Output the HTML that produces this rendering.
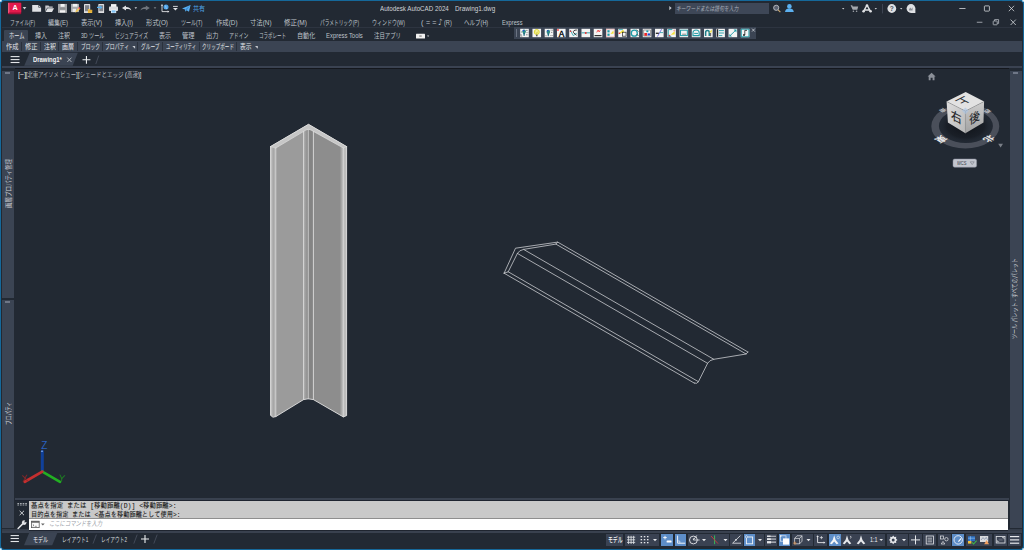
<!DOCTYPE html><html lang="ja"><head><meta charset="utf-8"><title>Autodesk AutoCAD 2024 - Drawing1.dwg</title><style>
html,body{margin:0;padding:0}
body{width:1024px;height:550px;overflow:hidden;background:#15689a;position:relative;font-family:"Liberation Sans","Noto Sans CJK JP",sans-serif}
.a{position:absolute}
.t{position:absolute;white-space:nowrap;transform-origin:0 50%;line-height:1;height:1em}
.v{position:absolute;white-space:nowrap;transform-origin:0 0;line-height:1;height:1em;font-size:6.6px;color:#d0d3d8}
svg{position:absolute;left:0;top:0;overflow:visible}

</style></head><body>
<div class="a" style="left:0px;top:0px;width:2.1px;height:2.1px;background:radial-gradient(circle at 0% 0%,#f2f2f2 0,#e4eef4 35%,#6fb4dc 70%,rgba(21,104,154,0) 100%)"></div>
<div class="a" style="left:1021.9px;top:0px;width:2.1px;height:2.1px;background:radial-gradient(circle at 100% 0%,#f2f2f2 0,#e4eef4 35%,#6fb4dc 70%,rgba(21,104,154,0) 100%)"></div>
<div class="a" style="left:0px;top:547.9px;width:2.1px;height:2.1px;background:radial-gradient(circle at 0% 100%,#f2f2f2 0,#e4eef4 35%,#6fb4dc 70%,rgba(21,104,154,0) 100%)"></div>
<div class="a" style="left:1021.9px;top:547.9px;width:2.1px;height:2.1px;background:radial-gradient(circle at 100% 100%,#f2f2f2 0,#e4eef4 35%,#6fb4dc 70%,rgba(21,104,154,0) 100%)"></div>
<div class="a" style="left:1.2px;top:1.2px;width:1021.4px;height:547.4px;border-radius:3.5px;background:#222933"></div>
<div class="a" style="left:2px;top:26.6px;width:1020px;height:0.8px;background:#2d3440;"></div>
<div class="a" style="left:674.5px;top:3px;width:94.5px;height:10.6px;background:#3e4757;"></div>
<div class="a" style="left:4px;top:30px;width:24px;height:11.2px;background:#3b4453;border-radius:1px 1px 0 0;"></div>
<div class="a" style="left:2px;top:41px;width:1020px;height:10.5px;background:#3b4453;"></div>
<div class="a" style="left:21.0px;top:41.5px;width:1.0px;height:9.5px;background:#2a313c;"></div>
<div class="a" style="left:40.0px;top:41.5px;width:1.0px;height:9.5px;background:#2a313c;"></div>
<div class="a" style="left:58.0px;top:41.5px;width:1.0px;height:9.5px;background:#2a313c;"></div>
<div class="a" style="left:77.0px;top:41.5px;width:1.0px;height:9.5px;background:#2a313c;"></div>
<div class="a" style="left:102.2px;top:41.5px;width:1.0px;height:9.5px;background:#2a313c;"></div>
<div class="a" style="left:136.6px;top:41.5px;width:1.0px;height:9.5px;background:#2a313c;"></div>
<div class="a" style="left:161.9px;top:41.5px;width:1.0px;height:9.5px;background:#2a313c;"></div>
<div class="a" style="left:198.5px;top:41.5px;width:1.0px;height:9.5px;background:#2a313c;"></div>
<div class="a" style="left:235.7px;top:41.5px;width:1.0px;height:9.5px;background:#2a313c;"></div>
<div class="a" style="left:514px;top:27.4px;width:241.5px;height:11.2px;background:#3b4453;"></div>
<div class="a" style="left:516px;top:29px;width:1.2px;height:7.5px;background:#6b7382;"></div>
<svg width="1024" height="550"><polygon points="24.2,65.7 29.7,52.8 77.8,52.8 72.7,65.7" fill="#3b4453"/></svg>
<div class="a" style="left:2px;top:65.5px;width:1020px;height:2.6px;background:#3a4251;"></div>
<div class="a" style="left:15px;top:68px;width:993.5px;height:1.2px;background:#14171d;"></div>
<div class="a" style="left:2.4px;top:71px;width:11.8px;height:226.8px;background:#3b4453;"></div>
<div class="a" style="left:2.4px;top:300px;width:11.8px;height:228.2px;background:#3b4453;"></div>
<div class="a" style="left:1010px;top:71px;width:12px;height:457.2px;background:#3b4453;"></div>
<div class="a" style="left:5px;top:72.3px;width:5.2px;height:1.8px;background:#6f7787;"></div>
<div class="a" style="left:5px;top:301.4px;width:5.2px;height:1.8px;background:#6f7787;"></div>
<div class="a" style="left:1012.7px;top:72.3px;width:5.2px;height:1.8px;background:#6f7787;"></div>
<div class="a" style="left:15px;top:497.5px;width:993.5px;height:2.2px;background:#39414f;"></div>
<div class="a" style="left:15px;top:499.7px;width:993.5px;height:1.3px;background:#1e2430;"></div>
<div class="a" style="left:29px;top:501px;width:979.3px;height:17px;background:#c9c9c9;"></div>
<div class="a" style="left:29px;top:518px;width:979.3px;height:11.8px;background:#ffffff;"></div>
<div class="a" style="left:29px;top:517.9px;width:979.3px;height:0.7px;background:#8e8e8e;"></div>
<div class="a" style="left:2px;top:529.8px;width:1020px;height:1.1px;background:#1f2530;"></div>
<div class="a" style="left:2px;top:530.9px;width:1020px;height:1.7px;background:#39414f;"></div>
<div class="a" style="left:2px;top:528.7px;width:27px;height:2.3px;background:#353d4a;"></div>
<div class="a" style="left:1008.3px;top:528.7px;width:13.7px;height:2.3px;background:#353d4a;"></div>
<svg width="1024" height="550"><polygon points="24,545.2 29.3,532.6 57.5,532.6 52.2,545.2" fill="#3b4453"/></svg>
<div class="a" style="left:606.3px;top:533.8px;width:17.2px;height:12.1px;background:#3a4252;"></div>
<div class="a" style="left:625px;top:533.8px;width:34.3px;height:12.1px;background:#3a4252;"></div>
<div class="a" style="left:661px;top:533.8px;width:12px;height:12.1px;background:#5e8ec8;"></div>
<div class="a" style="left:674.5px;top:533.8px;width:11.9px;height:12.1px;background:#5e8ec8;"></div>
<div class="a" style="left:687.8px;top:533.8px;width:41.2px;height:12.1px;background:#3a4252;"></div>
<div class="a" style="left:730px;top:533.8px;width:12.5px;height:12.1px;background:#3a4252;"></div>
<div class="a" style="left:743.5px;top:533.8px;width:11.5px;height:12.1px;background:#5e8ec8;"></div>
<div class="a" style="left:755px;top:533.8px;width:9px;height:12.1px;background:#3a4252;"></div>
<div class="a" style="left:765.2px;top:533.8px;width:11.8px;height:12.1px;background:#3a4252;"></div>
<div class="a" style="left:778.8px;top:533.8px;width:11.7px;height:12.1px;background:#5e8ec8;"></div>
<div class="a" style="left:791.5px;top:533.8px;width:21.5px;height:12.1px;background:#3a4252;"></div>
<div class="a" style="left:814.2px;top:533.8px;width:12.8px;height:12.1px;background:#3a4252;"></div>
<div class="a" style="left:829px;top:533.8px;width:12px;height:12.1px;background:#5e8ec8;"></div>
<div class="a" style="left:841px;top:533.8px;width:44.3px;height:12.1px;background:#3a4252;"></div>
<div class="a" style="left:886.8px;top:533.8px;width:21.2px;height:12.1px;background:#3a4252;"></div>
<div class="a" style="left:909.2px;top:533.8px;width:12.8px;height:12.1px;background:#3a4252;"></div>
<div class="a" style="left:923.3px;top:533.8px;width:13.0px;height:12.1px;background:#3a4252;"></div>
<div class="a" style="left:937.7px;top:533.8px;width:12.9px;height:12.1px;background:#3a4252;"></div>
<div class="a" style="left:952.1px;top:533.8px;width:12.3px;height:12.1px;background:#5e8ec8;"></div>
<div class="a" style="left:966.3px;top:533.8px;width:26.2px;height:12.1px;background:#3a4252;"></div>
<div class="a" style="left:994.1px;top:533.8px;width:12.8px;height:12.1px;background:#3a4252;"></div>
<div class="a" style="left:1008.1px;top:533.8px;width:13.1px;height:12.1px;background:#3a4252;"></div>
<svg width="1024" height="550" viewBox="0 0 1024 550">
<g stroke-linejoin="round" stroke-linecap="round">
<polygon points="270.4,146.6 308.5,124.3 346.7,146.6 346.7,415.6 343.3,416.9 313.4,399.6 308.2,398.8 303.6,399.6 275.8,416.6 273,417.2 270.5,415.3" fill="#9a9a9a"/>
<polygon points="270.4,146.6 308.5,124.3 346.7,146.6 343.4,147.9 313.4,131.4 311,129.8 308.5,129.3 306,129.8 303.6,131.2 275.8,147.9" fill="#c6c6c6"/>
<polygon points="270.5,146.8 275.8,148 275.8,416.6 273,417.2 270.5,415.3" fill="#b2b2b2"/>
<polygon points="270.5,146.8 273,147.6 273,417.2 270.5,415.3" fill="#bdbdbd"/>
<polygon points="275.8,148 303.6,131.4 303.6,399.6 275.8,416.6" fill="#9b9b9b"/>
<defs><linearGradient id="cg" x1="0" y1="0" x2="1" y2="0"><stop offset="0" stop-color="#adadad"/><stop offset="1" stop-color="#878787"/></linearGradient><linearGradient id="tg" x1="0" y1="0" x2="1" y2="0"><stop offset="0" stop-color="#8d8d8d"/><stop offset="1" stop-color="#c6c6c6"/></linearGradient></defs>
<polygon points="303.6,131.4 308.3,129.4 308.3,398.8 303.6,399.6" fill="url(#cg)"/>
<polygon points="308.3,129.4 313.4,131.4 313.4,399.6 308.3,398.8" fill="#848484"/>
<polygon points="313.4,131.4 343.4,148 343.4,416.9 313.4,399.6" fill="#8d8d8d"/>
<polygon points="339.8,146.2 343.4,148 343.4,416.9 339.8,414.9" fill="url(#tg)"/>
<polygon points="343.4,148 346.7,146.8 346.7,415.6 343.4,416.9" fill="#bcbcbc"/>
<polyline points="270.4,146.6 308.5,124.3 346.7,146.6" fill="none" stroke="#dcdcdc" stroke-width="1.0" opacity="1"/>
<polyline points="275.8,148 303.6,131.4 306,129.9 308.5,129.3 311,129.9 313.4,131.4 343.4,148" fill="none" stroke="#dcdcdc" stroke-width="0.8" opacity="1"/>
<polyline points="270.6,146.6 270.6,415.3 273,417.2 275.8,416.6 303.6,399.6 308.2,398.8 313.4,399.6 343.3,416.9 346.6,415.6 346.6,146.6" fill="none" stroke="#dcdcdc" stroke-width="0.9" opacity="1"/>
<polyline points="273,147.4 273,417" fill="none" stroke="#8c8c8c" stroke-width="0.6" opacity="0.9"/>
<polyline points="275.8,148 275.8,416.6" fill="none" stroke="#dcdcdc" stroke-width="0.8" opacity="1"/>
<polyline points="303.6,131.4 303.6,399.6" fill="none" stroke="#dcdcdc" stroke-width="0.9" opacity="1"/>
<polyline points="308.3,129.4 308.3,398.8" fill="none" stroke="#dcdcdc" stroke-width="0.8" opacity="0.9"/>
<polyline points="313.4,131.4 313.4,399.6" fill="none" stroke="#dcdcdc" stroke-width="0.9" opacity="1"/>
<polyline points="343.4,148 343.4,416.9" fill="none" stroke="#dcdcdc" stroke-width="0.8" opacity="1"/>
<polyline points="270.4,146.6 275.8,148" fill="none" stroke="#dcdcdc" stroke-width="0.7" opacity="1"/>
<polyline points="346.7,146.6 343.4,148" fill="none" stroke="#dcdcdc" stroke-width="0.7" opacity="1"/>
</g>
<g fill="none" stroke="#d4d6d9" stroke-width="0.75" stroke-linejoin="round" stroke-linecap="round">
<path d="M504.1,273.2 L515.5,248.2 L557.7,242.1 L555.9,244.1 L523.6,249.4 Q519.3,250.2 517.4,253.4 L508.2,271.8 L504.1,273.2"/>
<path d="M557.7,242.1 L747.9,352.0"/>
<path d="M555.9,244.1 L746.1,354.0"/>
<path d="M523.6,249.4 L713.8,359.3"/>
<path d="M517.4,253.4 L707.6,363.3"/>
<path d="M508.2,271.8 L698.4,381.7"/>
<path d="M504.1,273.2 L694.3,383.1"/>
<path d="M747.9,352.0 L746.1,354.0 L713.8,359.3 Q709.5,360.1 707.6,363.3 L698.4,381.7 Q697.2,384.3 694.3,383.1"/>
</g>
<g stroke-linecap="round" fill="none">
<line x1="42.3" y1="471.3" x2="42.3" y2="451.2" stroke="#10409a" stroke-width="3"/>
<line x1="42.3" y1="471.6" x2="60" y2="481.8" stroke="#22b022" stroke-width="2.6"/>
<line x1="42.3" y1="471.6" x2="24.8" y2="481.8" stroke="#c42f2f" stroke-width="2.8"/>
<circle cx="42" cy="451.3" r="0.8" fill="#9cc4ff" stroke="none"/>
</g>
<text x="41.2" y="448.8" font-family="Liberation Sans,sans-serif" font-size="10" fill="#2a62c0">Z</text>
<text x="21.6" y="481.5" font-family="Liberation Sans,sans-serif" font-size="9.5" fill="#8a2626" transform="rotate(-8 25 478)">X</text>
<text x="58.8" y="481.6" font-family="Liberation Sans,sans-serif" font-size="9.5" fill="#1c8a1c" transform="rotate(8 62 478)">Y</text>
<defs><radialGradient id="vs" cx="0.5" cy="0.5" r="0.5"><stop offset="0" stop-color="#0c0f14" stop-opacity="0.9"/><stop offset="0.7" stop-color="#14181f" stop-opacity="0.6"/><stop offset="1" stop-color="#222933" stop-opacity="0"/></radialGradient>
<linearGradient id="fl" x1="0" y1="0" x2="1" y2="1"><stop offset="0" stop-color="#dedede"/><stop offset="1" stop-color="#b8b8b8"/></linearGradient>
<linearGradient id="fr" x1="0" y1="0" x2="0" y2="1"><stop offset="0" stop-color="#cdcdcd"/><stop offset="1" stop-color="#a2a2a2"/></linearGradient></defs>
<path fill-rule="evenodd" fill="#4a4f5a" d="M931.3,126.2 a34,22.2 0 1,0 68,0 a34,22.2 0 1,0 -68,0 Z M938.9,126 a27,17 0 1,1 54,0 a27,17 0 1,1 -54,0 Z"/>
<ellipse cx="965.6" cy="126" rx="27" ry="17" fill="url(#vs)"/>
<polygon points="965.7,92 984.1,101.5 965.4,111.1 946.6,101.5" fill="#e2e2e2"/>
<polygon points="946.6,101.5 965.4,111.1 965.4,133.3 947.9,122.5" fill="url(#fl)"/>
<polygon points="984.1,101.5 965.4,111.1 965.4,133.3 983.5,122.5" fill="url(#fr)"/>
<polyline points="946.6,101.5 965.4,111.1 984.1,101.5" fill="none" stroke="#8e8e8e" stroke-width="0.45"/><line x1="965.4" y1="111.1" x2="965.4" y2="133.3" stroke="#b0b0b0" stroke-width="0.4"/>
<rect x="963" y="108.4" width="4.8" height="4.8" fill="#a9c4e6" opacity="0.6" transform="rotate(45 965.4 110.8)"/>
<text font-family="Liberation Sans,Noto Sans CJK JP,sans-serif" font-size="11" fill="#2c2e32" font-weight="500" text-anchor="middle" transform="matrix(-0.935,0.48,-0.92,-0.475,963.6,100.6)" x="0" y="3.96">上</text>
<text font-family="Liberation Sans,Noto Sans CJK JP,sans-serif" font-size="11.5" fill="#2c2e32" font-weight="500" text-anchor="middle" transform="matrix(0.94,0.48,0.03,1.05,956.2,117.2)" x="0" y="4.14">右</text>
<text font-family="Liberation Sans,Noto Sans CJK JP,sans-serif" font-size="11.5" fill="#2c2e32" font-weight="500" text-anchor="middle" transform="matrix(0.935,-0.48,0,1.08,974.6,117.4)" x="0" y="4.14">後</text>
<text font-family="Liberation Sans,Noto Sans CJK JP,sans-serif" font-size="9.6" fill="#e6e6e6" font-weight="700" text-anchor="middle" transform="matrix(-0.84,0.53,-0.84,-0.53,940.8,139)" x="0" y="3.46">東</text>
<text font-family="Liberation Sans,Noto Sans CJK JP,sans-serif" font-size="9.2" fill="#e6e6e6" font-weight="700" text-anchor="middle" transform="matrix(-0.84,0.53,-0.84,-0.53,989,138.8)" x="0" y="3.31">北</text>
<text font-family="Liberation Sans,Noto Sans CJK JP,sans-serif" font-size="5.6" fill="#c4c6ca" font-weight="700" text-anchor="middle" transform="matrix(-0.84,0.5,-0.84,-0.5,942.6,110.1)" x="0" y="2.02">南</text>
<text font-family="Liberation Sans,Noto Sans CJK JP,sans-serif" font-size="5.6" fill="#c4c6ca" font-weight="700" text-anchor="middle" transform="matrix(-0.84,0.5,-0.84,-0.5,987.3,111.1)" x="0" y="2.02">西</text>
<path d="M927.6,76.6 L931.6,72.8 L935.6,76.6 L934.5,76.6 L934.5,80.2 L932.6,80.2 L932.6,77.8 L930.6,77.8 L930.6,80.2 L928.7,80.2 L928.7,76.6 Z" fill="#8b9099"/>
<polygon points="998.2,143.8 1003,143.8 1000.6,147.6" fill="#7a7f88"/>
<rect x="953" y="159" width="23.6" height="8.2" rx="1.6" fill="#c3c6cf" stroke="#8f93a0" stroke-width="0.5"/>
<polygon points="970.2,161.8 974.2,161.8 972.2,164.6" fill="none" stroke="#6a6e78" stroke-width="0.5"/>
</svg>
<svg width="1024" height="550" viewBox="0 0 1024 550">
<rect x="8" y="2.8" width="13.2" height="11.4" rx="0.8" fill="#a31038"/>
<rect x="8" y="2.8" width="13.2" height="9.8" rx="0.6" fill="#e21a4c"/>
<polygon points="8,2.8 9.4,3.2 9.4,12.2 8,13.6" fill="#f0587c"/>
<text x="15" y="10.3" font-family="Liberation Sans,sans-serif" font-weight="bold" font-size="7.2" fill="#fff" text-anchor="middle">A</text>
<polygon points="22.6,7 26.400000000000002,7 24.5,9.4" fill="#c9ccd1"/>
<polygon points="32.2,5 38.4,5 41.1,7.6 41.1,11.8 32.2,11.8" fill="#dfe1e4"/><polygon points="38.4,5 38.4,7.6 41.1,7.6" fill="#222933"/><polygon points="38.9,5.6 38.9,7.1 40.4,7.1" fill="#dfe1e4"/>
<path d="M45.3,5.4 h3.2 l0.8,1 h3.4 v1.4 h-5.6 l-1.8,3.6 z" fill="#c9cbcf"/><polygon points="47.5,8.3 54,8.3 52,11.9 45.5,11.9" fill="#dfe1e4"/>
<rect x="58" y="3.9" width="9" height="9" fill="#a4a6a9"/><rect x="60.6" y="4" width="4" height="2.8" fill="#f4f4f4"/><rect x="60" y="10.3" width="5.2" height="2.2" fill="#f4f4f4"/><rect x="59.8" y="7.6" width="5.6" height="2" fill="#8e9093"/>
<rect x="71" y="3.9" width="8" height="8.2" fill="#a9abae"/><rect x="72.8" y="3.9" width="4.6" height="2.8" fill="#f2f2f2"/><rect x="72.6" y="8.8" width="3.4" height="3.3" fill="#e8e8e8"/>
<polygon points="75.2,12.6 76,10.4 78.6,7.6 80,9 77.3,11.8" fill="#f2c95c"/><polygon points="78.2,7.9 79.2,6.9 80.6,8.3 79.6,9.3" fill="#e8455a"/>
<rect x="84" y="4.1" width="6.2" height="9" rx="0.6" fill="#dcdde0"/><rect x="85" y="5.2" width="4.2" height="6" fill="#808389"/>
<path d="M87.9,9 h1.6 l0.5,0.7 h2.2 v3.2 h-4.3 z" fill="#f0bc42"/><rect x="88.3" y="10.6" width="4" height="0.7" fill="#c9952a"/>
<rect x="98.3" y="4.1" width="5.8" height="9" rx="0.6" fill="#dcdde0"/><rect x="99.3" y="5.2" width="3.8" height="6" fill="#808389"/>
<path d="M97,6.8 h3.2 v-1.2 l2.3,1.8 l-2.3,1.8 v-1.2 h-3.2 z" fill="#58b2f2"/>
<rect x="111" y="4.1" width="5.4" height="3" fill="#f4f4f4"/><rect x="109" y="6.4" width="9" height="4.6" rx="0.8" fill="#dcdde0"/><rect x="111" y="9.6" width="5.2" height="3.5" fill="#f4f4f4"/><rect x="111.6" y="10.3" width="4" height="2.3" fill="#7cc0f4"/>
<path d="M122,8 L126,5.4 V7 C129,7 131,8.4 131.3,10.4 C130,9.2 128.4,8.9 126,9 V10.6 Z" fill="#dfe1e4"/>
<polygon points="134.5,7.3 137.1,7.3 135.8,9.0" fill="#c9ccd1"/>
<path d="M149.8,8 L145.8,5.4 V7 C142.8,7 140.8,8.4 140.5,10.4 C141.8,9.2 143.4,8.9 145.8,9 V10.6 Z" fill="#6f747c"/>
<polygon points="153.7,7.3 156.29999999999998,7.3 155.0,9.0" fill="#7b8088"/>
<path d="M162,4.6 V11.6 H168.6" fill="none" stroke="#dfe1e4" stroke-width="0.9"/><polygon points="160.8,5.8 162,4.2 163.2,5.8" fill="#dfe1e4"/><polygon points="167.6,10.4 169.4,11.6 167.6,12.8" fill="#dfe1e4"/>
<circle cx="166" cy="7" r="2.5" fill="#4fa4ea"/><path d="M165,5.6 q1.4,0.6 1,1.8 t0.8,1.4" fill="none" stroke="#bfe0fb" stroke-width="0.6"/>
<rect x="173" y="5.9" width="4.8" height="0.9" fill="#dfe1e4"/><polygon points="173,8 177.8,8 175.4,10.5" fill="#dfe1e4"/>
<polygon points="182,8.4 190.6,5 189,11.8 186.6,10.2 185.4,11.8 185,9.6" fill="#58aef0"/><polygon points="185,9.6 190.6,5 186.6,10.2" fill="#3b8ad0"/>
<rect x="416" y="33.8" width="9" height="4.6" rx="0.5" fill="#f0f0f0"/><rect x="419.3" y="35.6" width="2.4" height="0.9" fill="#555"/><polygon points="427,35.6 429.2,35.6 428.1,37.0" fill="#c9ccd1"/>
<path d="M132.3,46 h2.8 v2.8 z" fill="#c9ccd1"/>
<path d="M255,46 h2.8 v2.8 z" fill="#c9ccd1"/>
<rect x="10.6" y="56.050000000000004" width="8.9" height="1.1" fill="#e4e6e9"/>
<rect x="10.6" y="59.050000000000004" width="8.9" height="1.1" fill="#e4e6e9"/>
<rect x="10.6" y="61.95" width="8.9" height="1.1" fill="#e4e6e9"/>
<path d="M67.3,57.6 L71.5,62 M71.5,57.6 L67.3,62" stroke="#c2c6cc" stroke-width="0.8" fill="none"/>
<path d="M82.5,59.8 H90.4 M86.45,56 V63.7" stroke="#eceef0" stroke-width="1.1" fill="none"/>
<path d="M98.8,55.5 L95.8,64" stroke="#4a5261" stroke-width="0.8" fill="none"/>
<polygon points="669.3,6 671.6,8.1 669.3,10.2" fill="#c9ccd1"/>
<circle cx="776.2" cy="7.8" r="2.6" fill="#5a6170" stroke="#c9ccd1" stroke-width="0.8"/><path d="M778,9.8 L780.4,12.2" stroke="#c9a670" stroke-width="1.1"/>
<circle cx="789.4" cy="6.4" r="2.3" fill="#5cb0f0"/><path d="M785,12 q0.4,-3.4 4.4,-3.4 t4.4,3.4 z" fill="#5cb0f0"/>
<polygon points="842,8 844.4,8 843.2,9.5" fill="#c9ccd1"/>
<path d="M850.6,5.2 h1.6 l0.6,1.2 h5.4 l-0.9,3.4 h-4.6 z" fill="#a4a8ae"/><circle cx="853.4" cy="11.3" r="0.8" fill="#a4a8ae"/><circle cx="856.6" cy="11.3" r="0.8" fill="#a4a8ae"/>
<path d="M867,5.2 L863.2,11.8 M867,5.2 L870.8,11.8 M864.6,10 H869.6" stroke="#dfe1e4" stroke-width="1.4" fill="none"/><circle cx="867" cy="5.5" r="1.3" fill="#dfe1e4"/><circle cx="863.6" cy="11.3" r="1.3" fill="#dfe1e4"/><circle cx="870.6" cy="11.3" r="1.3" fill="#dfe1e4"/>
<polygon points="874.6,8 877.0,8 875.8000000000001,9.5" fill="#c9ccd1"/>
<rect x="882.2" y="4" width="0.7" height="9.4" fill="#4a5160"/>
<circle cx="891.8" cy="8.5" r="4.4" fill="#dfe1e4"/><text x="891.8" y="10.9" font-family="Liberation Sans,sans-serif" font-size="6.6" font-weight="bold" text-anchor="middle" fill="#4a5160">?</text>
<polygon points="900,8 902.4,8 901.2,9.5" fill="#c9ccd1"/>
<path d="M915.4,8.5 a4.4,4.4 0 1,0 -4.4,4.4 h4.4 z" fill="#dfe1e4"/><path d="M909,9.6 l1.2,-2 l1.2,1.4 l1.2,-1.8 v3.2 h-3.6 z" fill="#8a8f98"/>
<rect x="959.3" y="8.1" width="6.2" height="0.8" fill="#d6d9dd"/>
<rect x="984.4" y="5.9" width="5" height="5.2" rx="0.6" fill="none" stroke="#d6d9dd" stroke-width="0.8"/>
<path d="M1008.8,5.8 L1014.1,11.2 M1014.1,5.8 L1008.8,11.2" stroke="#d6d9dd" stroke-width="0.8"/>
<rect x="976.8" y="21.8" width="5.6" height="0.8" fill="#b8bcc3"/>
<rect x="993.2" y="21" width="4" height="3.8" rx="0.5" fill="none" stroke="#b8bcc3" stroke-width="0.8"/><path d="M994.6,21 V19.6 H998.6 V23.4 H997.4" fill="none" stroke="#b8bcc3" stroke-width="0.8"/>
<path d="M1010.6,19.6 L1015.8,25 M1015.8,19.6 L1010.6,25" stroke="#d6d9dd" stroke-width="0.8"/>
<rect x="520.20" y="28.8" width="8.6" height="8.4" fill="#f4f4f4"/>
<rect x="532.46" y="28.8" width="8.6" height="8.4" fill="#f4f4f4"/>
<rect x="544.71" y="28.8" width="8.6" height="8.4" fill="#f4f4f4"/>
<rect x="556.97" y="28.8" width="8.6" height="8.4" fill="#f4f4f4"/>
<rect x="569.22" y="28.8" width="8.6" height="8.4" fill="#f4f4f4"/>
<rect x="581.48" y="28.8" width="8.6" height="8.4" fill="#f4f4f4"/>
<rect x="593.74" y="28.8" width="8.6" height="8.4" fill="#f4f4f4"/>
<rect x="605.99" y="28.8" width="8.6" height="8.4" fill="#f4f4f4"/>
<rect x="618.25" y="28.8" width="8.6" height="8.4" fill="#f4f4f4"/>
<rect x="630.50" y="28.8" width="8.6" height="8.4" fill="#f4f4f4"/>
<rect x="642.76" y="28.8" width="8.6" height="8.4" fill="#f4f4f4"/>
<rect x="655.02" y="28.8" width="8.6" height="8.4" fill="#f4f4f4"/>
<rect x="667.27" y="28.8" width="8.6" height="8.4" fill="#f4f4f4"/>
<rect x="679.53" y="28.8" width="8.6" height="8.4" fill="#f4f4f4"/>
<rect x="691.78" y="28.8" width="8.6" height="8.4" fill="#f4f4f4"/>
<rect x="704.04" y="28.8" width="8.6" height="8.4" fill="#f4f4f4"/>
<rect x="716.30" y="28.8" width="8.6" height="8.4" fill="#f4f4f4"/>
<rect x="728.55" y="28.8" width="8.6" height="8.4" fill="#f4f4f4"/>
<rect x="740.81" y="28.8" width="8.6" height="8.4" fill="#f4f4f4"/>
<ellipse cx="524.10" cy="31.6" rx="1.8" ry="2.1" fill="#2c8c86"/><circle cx="523.50" cy="30.6" r="0.8" fill="#2a4ad0"/><polygon points="523.10,33 525.10,33 524.50,36 523.70,36" fill="#1d6a80"/><path d="M521.00,34 v2.2 h1.4 M526.20,30.4 h1.8 M526.60,32.6 h1.6 M526.20,34.8 h2 M521.20,32 h1" stroke="#222" stroke-width="0.6" fill="none" stroke-dasharray="0.8 0.5"/>
<ellipse cx="536.76" cy="32" rx="2.5" ry="2.5" fill="#f7f4a6" stroke="#dcd422" stroke-width="0.9"/><path d="M535.66,31.4 l1.1,2.4 l1.1,-2.4" stroke="#cfc81e" stroke-width="0.6" fill="none"/><rect x="535.96" y="34.6" width="1.6" height="1.7" fill="#555"/>
<ellipse cx="548.31" cy="31.8" rx="1.8" ry="2.1" fill="#2c8c86"/><circle cx="547.71" cy="30.8" r="0.8" fill="#2a4ad0"/><polygon points="547.31,33.2 549.31,33.2 548.71,36.2 547.91,36.2" fill="#1d6a80"/><path d="M545.51,35.8 h1.6 M550.71,30.2 h2 M551.11,32.4 h1.6 M550.51,35.6 h2.2" stroke="#222" stroke-width="0.6" fill="none" stroke-dasharray="0.8 0.5"/>
<text x="561.57" y="36.5" font-family="Liberation Sans,sans-serif" font-size="8.4" text-anchor="middle" fill="#000" stroke="#000" stroke-width="0.35">A</text><rect x="557.17" y="29.2" width="1.6" height="1.6" fill="#f33"/>
<path d="M570.22,30 l3,5.6 l3.6,-2.4" stroke="#1f9aa6" stroke-width="0.8" fill="none"/><path d="M576.82,30 q-4,0 -3.4,2.6 l3.2,2.6" stroke="#222" stroke-width="0.9" fill="none"/><rect x="569.82" y="30.6" width="1.4" height="1.4" fill="#e33"/>
<rect x="581.48" y="32.4" width="8.6" height="0.9" fill="#1f9aa6"/><circle cx="585.78" cy="32.9" r="1" fill="#e33"/>
<path d="M596.74,32.4 l1.4,-2.4 l1,2 l1.2,-2" stroke="#e33" stroke-width="0.8" fill="none"/><rect x="594.54" y="35" width="7" height="1.2" fill="#333"/>
<rect x="606.29" y="29.1" width="8" height="7.8" fill="none" stroke="#e7a2a2" stroke-width="0.6"/><rect x="607.39" y="30.2" width="2.2" height="2.2" fill="#1f9aa6"/><rect x="607.39" y="33.6" width="2.2" height="2.2" fill="#1f9aa6"/><polygon points="610.39,34 613.39,30.4 613.79,33.4" fill="#f3e23a"/>
<polygon points="618.85,33.4 623.25,29.4 624.25,32.6" fill="#f3e23a"/><rect x="622.45" y="32.2" width="3.6" height="4" fill="none" stroke="#222" stroke-width="0.7"/><rect x="618.65" y="32.6" width="1.6" height="1.4" fill="#e33"/><path d="M618.85,29.6 h4" stroke="#1f9aa6" stroke-width="0.8"/>
<circle cx="634.30" cy="33.2" r="3" fill="none" stroke="#1f9aa6" stroke-width="1.3"/><path d="M636.50,29.6 l2,2 M636.70,34 l1.8,2" stroke="#333" stroke-width="0.7"/>
<rect x="643.76" y="30" width="6.6" height="6" fill="none" stroke="#666" stroke-width="0.6"/><rect x="644.36" y="33" width="2.6" height="2.8" fill="#e22"/><rect x="647.56" y="33.4" width="2.4" height="2" fill="#24c"/><rect x="646.36" y="30.4" width="2" height="1.8" fill="#1f9aa6"/>
<path d="M657.42,36.6 L661.62,29.2" stroke="#44d" stroke-width="0.7"/><rect x="655.82" y="32.6" width="3" height="1.4" fill="#333"/><path d="M660.02,32.6 h3" stroke="#1f9aa6" stroke-width="0.8"/>
<path d="M668.27,29.6 v6.8 h3 M668.27,29.6 h4" stroke="#1f9aa6" stroke-width="0.9" fill="none"/><polygon points="670.67,34.8 674.87,31 674.67,34.6" fill="#f3e23a"/><circle cx="674.27" cy="30.4" r="1" fill="#e7a2a2"/><circle cx="669.47" cy="35.6" r="0.9" fill="#e33"/>
<rect x="680.53" y="30.2" width="6.8" height="5.4" fill="none" stroke="#1f9aa6" stroke-width="1"/><path d="M682.13,34.2 h4" stroke="#444" stroke-width="0.6"/>
<path d="M692.98,33 q0,-3 3.1,-3 t3.1,3 v2.6 h-6.2 z" fill="none" stroke="#1f9aa6" stroke-width="1.1"/><path d="M694.18,33.4 h3.8" stroke="#1f9aa6" stroke-width="1"/>
<path d="M705.64,36 v-3.6 q0,-2 1.8,-2 t1.8,2 v3.6" fill="none" stroke="#1f7f8a" stroke-width="1.5"/><polygon points="709.04,32.6 711.84,29.6 711.64,32.6" fill="#f3e23a"/><path d="M710.64,33 v3.2" stroke="#333" stroke-width="0.8"/>
<rect x="716.90" y="29.2" width="1.3" height="7.6" fill="#222"/><path d="M718.90,30.6 h5 M718.90,33 h5 M718.90,35.6 h3.4" stroke="#1f9aa6" stroke-width="0.9"/>
<path d="M729.75,36 L735.95,30" stroke="#1f9aa6" stroke-width="0.9"/><polygon points="733.55,29.6 736.55,29.4 736.35,32.4" fill="#1f9aa6"/><polygon points="729.35,34 729.35,36.6 731.95,36.6" fill="#1f9aa6"/>
<rect x="741.31" y="29.2" width="7.6" height="7.6" fill="none" stroke="#1f9aa6" stroke-width="0.9"/><path d="M744.81,30.4 v4.6 M744.81,30.4 h2.2" stroke="#222" stroke-width="0.8" fill="none"/><circle cx="744.01" cy="35" r="1" fill="#222"/>
<path d="M752,28.6 L754.8,31.6 M754.8,28.6 L752,31.6" stroke="#e0e2e6" stroke-width="0.7"/>
<rect x="17.4" y="503" width="1.7" height="0.8" fill="#c9ccd1"/><rect x="17.4" y="504.6" width="1.7" height="0.8" fill="#c9ccd1"/>
<rect x="20.0" y="503" width="1.7" height="0.8" fill="#c9ccd1"/><rect x="20.0" y="504.6" width="1.7" height="0.8" fill="#c9ccd1"/>
<rect x="22.6" y="503" width="1.7" height="0.8" fill="#c9ccd1"/><rect x="22.6" y="504.6" width="1.7" height="0.8" fill="#c9ccd1"/>
<rect x="25.2" y="503" width="1.7" height="0.8" fill="#c9ccd1"/><rect x="25.2" y="504.6" width="1.7" height="0.8" fill="#c9ccd1"/>
<path d="M19.6,510.8 L24,515.2 M24,510.8 L19.6,515.2" stroke="#dfe1e4" stroke-width="0.9"/>
<path d="M18.1,528.5 L23.2,523.4" stroke="#e4e6e9" stroke-width="1.5" stroke-linecap="round"/><circle cx="24.2" cy="522.6" r="2.3" fill="#e4e6e9"/><polygon points="24.3,522.5 25.2,519.4 27.8,521.8" fill="#222933"/>
<rect x="31.4" y="521.2" width="7.8" height="6.4" fill="#fafafa" stroke="#5a5a5a" stroke-width="0.8"/><rect x="31.4" y="521.2" width="7.8" height="1.5" fill="#5a5a5a"/><path d="M32.8,524.4 l1.2,0.9 l-1.2,0.9 M34.8,526.3 h2" stroke="#444" stroke-width="0.55" fill="none"/>
<polygon points="41,523.4 44.7,523.4 42.85,525.6" fill="#666"/>
<rect x="10.6" y="535.0500000000001" width="8.3" height="1.1" fill="#e4e6e9"/>
<rect x="10.6" y="537.95" width="8.3" height="1.1" fill="#e4e6e9"/>
<rect x="10.6" y="540.95" width="8.3" height="1.1" fill="#e4e6e9"/>
<path d="M96.4,534.6 L93.0,543.6" stroke="#4a5261" stroke-width="0.8"/>
<path d="M137.2,534.6 L133.79999999999998,543.6" stroke="#4a5261" stroke-width="0.8"/>
<path d="M157.2,534.6 L153.79999999999998,543.6" stroke="#4a5261" stroke-width="0.8"/>
<path d="M141,539 H149 M145,535 V543" stroke="#eceef0" stroke-width="1.1"/>
<path d="M627,537.2 h8.2 M628.6,535.8 v8.2 M627,539.8 h8.2 M631.1,535.8 v8.2 M627,542.4 h8.2 M633.6,535.8 v8.2 " stroke="#e6e8eb" stroke-width="0.8" fill="none"/>
<rect x="640.6" y="536.0" width="1.5" height="1.3" fill="#e6e8eb"/>
<rect x="640.6" y="539.0" width="1.5" height="1.3" fill="#e6e8eb"/>
<rect x="640.6" y="542.0" width="1.5" height="1.3" fill="#e6e8eb"/>
<rect x="643.8" y="536.0" width="1.5" height="1.3" fill="#e6e8eb"/>
<rect x="643.8" y="539.0" width="1.5" height="1.3" fill="#e6e8eb"/>
<rect x="643.8" y="542.0" width="1.5" height="1.3" fill="#e6e8eb"/>
<rect x="647.0" y="536.0" width="1.5" height="1.3" fill="#e6e8eb"/>
<rect x="647.0" y="539.0" width="1.5" height="1.3" fill="#e6e8eb"/>
<rect x="647.0" y="542.0" width="1.5" height="1.3" fill="#e6e8eb"/>
<polygon points="653,539 657,539 655.0,541.3" fill="#e6e8eb"/>
<path d="M663.2,537.6 h3.6 M665,535.8 v3.6" stroke="#fff" stroke-width="0.9"/><rect x="666.6" y="540.6" width="5" height="2" rx="0.6" fill="#fff"/>
<path d="M677.6,535.6 V543.2 H685.2" stroke="#f2f4f6" stroke-width="1" fill="none"/><path d="M677.6,541 H679.8 V543.2" stroke="#f2f4f6" stroke-width="0.6" fill="none"/>
<circle cx="693.4" cy="540" r="3.9" fill="none" stroke="#e6e8eb" stroke-width="0.9"/><path d="M693.4,540 h6.2 M693.4,540 l3.4,-4.6 M693.4,538.2 v1.8" stroke="#e6e8eb" stroke-width="0.8" fill="none"/>
<polygon points="702,539 706,539 704.0,541.3" fill="#e6e8eb"/>
<path d="M714.6,535.4 V544.2" stroke="#36b85a" stroke-width="1"/><path d="M711,536 L718,543.6" stroke="#d03a3a" stroke-width="0.9"/>
<polygon points="723.5,539 727.5,539 725.5,541.3" fill="#e6e8eb"/>
<path d="M740.4,535.6 L732.6,543.2 H741" stroke="#e6e8eb" stroke-width="0.8" fill="none"/><circle cx="736" cy="539.8" r="0.9" fill="#e6e8eb"/>
<rect x="746.4" y="537" width="6.2" height="6.8" fill="none" stroke="#f2f4f6" stroke-width="0.9"/><ellipse cx="746.4" cy="536.8" rx="0.9" ry="1.4" fill="#5e8ec8" stroke="#f2f4f6" stroke-width="0.6"/>
<polygon points="758,539 762,539 760.0,541.3" fill="#e6e8eb"/>
<rect x="767" y="535.8" width="9" height="0.8" fill="#e6e8eb"/><rect x="767" y="535.6" width="3.6" height="1.3" fill="#e6e8eb"/><rect x="767" y="538.6" width="9" height="0.9" fill="#e6e8eb"/><rect x="767" y="538.3" width="3.8" height="1.7" fill="#e6e8eb"/><rect x="767" y="541.6" width="9" height="1" fill="#e6e8eb"/><rect x="767" y="541.2" width="4" height="2.2" fill="#e6e8eb"/>
<rect x="780.6" y="535.8" width="5.4" height="5.4" fill="none" stroke="#dfe8f4" stroke-width="0.7"/><circle cx="780.8" cy="536" r="0.8" fill="#fff"/><rect x="783" y="538.4" width="6.2" height="6.2" fill="#fff"/>
<path d="M794.6,538.4 l2.4,-2.6 h5 v5.4 l-2.4,2.6 h-5 z M794.6,538.4 h5 v5.4 M799.6,538.4 l2.4,-2.6" stroke="#e6e8eb" stroke-width="0.7" fill="none"/><circle cx="794.8" cy="543.2" r="1.1" fill="none" stroke="#e08a3a" stroke-width="0.7"/>
<polygon points="806.5,539 810.5,539 808.5,541.3" fill="#e6e8eb"/>
<path d="M817.6,536 V542.6 H824.4" stroke="#e6e8eb" stroke-width="0.9" fill="none"/><polygon points="816.4,537 817.6,535.2 818.8,537" fill="#e6e8eb"/><polygon points="823.6,541.4 825.4,542.6 823.6,543.8" fill="#e6e8eb"/><path d="M821.4,536 v3.2 M819.8,537.6 h3.2" stroke="#e6e8eb" stroke-width="0.7"/>
<path d="M834.2,535.2 L835.7,540 L838.5,543.6 L836.6,544.3 L834.2,541.4 L831.8000000000001,544.3 L829.9000000000001,543.6 L832.7,540 Z" fill="#f4f6f8"/><circle cx="838.2" cy="537.4" r="1.3" fill="none" stroke="#f4f6f8" stroke-width="0.6"/>
<path d="M847,535.2 L848.5,540 L851.3,543.6 L849.4,544.3 L847,541.4 L844.6,544.3 L842.7,543.6 L845.5,540 Z" fill="#e6e8eb"/><path d="M850,536 l1.4,1.2 l-1.4,1.2" stroke="#e6e8eb" stroke-width="0.7" fill="none"/>
<path d="M861,535.2 L862.5,540 L865.3,543.6 L863.4,544.3 L861,541.4 L858.6,544.3 L856.7,543.6 L859.5,540 Z" fill="#e6e8eb"/>
<polygon points="879.4,539 883.0,539 881.1999999999999,541.1" fill="#e6e8eb"/>
<polygon points="897.50,539.90 896.06,541.09 896.24,542.94 894.39,542.76 893.20,544.20 892.01,542.76 890.16,542.94 890.34,541.09 888.90,539.90 890.34,538.71 890.16,536.86 892.01,537.04 893.20,535.60 894.39,537.04 896.24,536.86 896.06,538.71" fill="#e6e8eb"/><circle cx="893.2" cy="539.9" r="1.5" fill="#3a4252"/>
<polygon points="902,539 906,539 904.0,541.3" fill="#e6e8eb"/>
<path d="M911,539.9 H920 M915.5,535.4 V544.4" stroke="#e6e8eb" stroke-width="1"/>
<rect x="926.2" y="536" width="7.2" height="8" fill="none" stroke="#e6e8eb" stroke-width="0.8"/><path d="M927.6,538.2 h4.4 M927.6,540 h4.4 M927.6,541.8 h4.4" stroke="#e6e8eb" stroke-width="0.7"/>
<rect x="940.4" y="536" width="3" height="3" fill="none" stroke="#e6e8eb" stroke-width="0.7"/><circle cx="946.4" cy="539.2" r="1.7" fill="none" stroke="#e6e8eb" stroke-width="0.7"/><polygon points="941.2,544 943,541.4 944.8,544" fill="none" stroke="#e6e8eb" stroke-width="0.7"/>
<circle cx="958.2" cy="539.9" r="4.2" fill="none" stroke="#eef2f8" stroke-width="0.9"/><path d="M958.4,541.6 L961.2,538.4" stroke="#fff" stroke-width="1.1"/>
<rect x="968" y="536.2" width="7" height="5" fill="#2c6fc0"/><path d="M968,538.2 h7 M970.4,536.2 v5" stroke="#9cc8f4" stroke-width="0.6"/><rect x="968" y="541" width="3.4" height="2.6" fill="#f2c13c"/><path d="M972,542.4 l1.6,1.6 l3,-3.4" stroke="#3bb54a" stroke-width="1.1" fill="none"/>
<rect x="980" y="536" width="8.2" height="6" fill="#d8dadd"/><path d="M981,540 l2,-2.4 l1.6,1.8 l1.6,-2 l1.4,2.4" stroke="#6a7a9a" stroke-width="0.6" fill="none"/><polygon points="984.2,544.2 986.6,540 989,544.2" fill="#f0a060"/>
<rect x="996.2" y="536.4" width="8.8" height="6.6" fill="none" stroke="#e6e8eb" stroke-width="0.8"/><path d="M1002,537.6 h2 v1.6 M999.2,541.8 h-2 v-1.6" stroke="#e6e8eb" stroke-width="0.7" fill="none"/><rect x="998.6" y="538.6" width="4" height="2.2" fill="#59606e"/>
<rect x="1010" y="536.0" width="9.2" height="1.2" fill="#e6e8eb"/>
<rect x="1010" y="539.3" width="9.2" height="1.2" fill="#e6e8eb"/>
<rect x="1010" y="542.6" width="9.2" height="1.2" fill="#e6e8eb"/>
</svg>
<span class="t" id="t0" style="left:10px;top:19.10px;font-size:7px;color:#bfc3ca;transform:scaleX(0.6765)">ファイル(F)</span>
<span class="t" id="t1" style="left:48px;top:19.10px;font-size:7px;color:#bfc3ca;transform:scaleX(0.8568)">編集(E)</span>
<span class="t" id="t2" style="left:81px;top:19.10px;font-size:7px;color:#bfc3ca;transform:scaleX(0.8996)">表示(V)</span>
<span class="t" id="t3" style="left:115px;top:19.10px;font-size:7px;color:#bfc3ca;transform:scaleX(0.8734)">挿入(I)</span>
<span class="t" id="t4" style="left:146px;top:19.10px;font-size:7px;color:#bfc3ca;transform:scaleX(0.9125)">形式(O)</span>
<span class="t" id="t5" style="left:181px;top:19.10px;font-size:7px;color:#bfc3ca;transform:scaleX(0.7178)">ツール(T)</span>
<span class="t" id="t6" style="left:215.5px;top:19.10px;font-size:7px;color:#bfc3ca;transform:scaleX(0.9065)">作成(D)</span>
<span class="t" id="t7" style="left:250px;top:19.10px;font-size:7px;color:#bfc3ca;transform:scaleX(0.9065)">寸法(N)</span>
<span class="t" id="t8" style="left:284px;top:19.10px;font-size:7px;color:#bfc3ca;transform:scaleX(0.9388)">修正(M)</span>
<span class="t" id="t9" style="left:320px;top:19.10px;font-size:7px;color:#bfc3ca;transform:scaleX(0.6710)">パラメトリック(P)</span>
<span class="t" id="t10" style="left:372px;top:19.10px;font-size:7px;color:#bfc3ca;transform:scaleX(0.7130)">ウィンドウ(W)</span>
<span class="t" id="t11" style="left:421.2px;top:19.10px;font-size:7px;color:#bfc3ca;transform:scaleX(1.0240)">(</span>
<span class="t" id="t12" style="left:426px;top:19.10px;font-size:7px;color:#bfc3ca;transform:scaleX(1.0173)">= =</span>
<span class="t" id="t13" style="left:443.5px;top:19.10px;font-size:7px;color:#bfc3ca;transform:scaleX(0.8026)">(R)</span>
<span class="t" id="t14" style="left:464px;top:19.10px;font-size:7px;color:#bfc3ca;transform:scaleX(0.7878)">ヘルプ(H)</span>
<span class="t" id="t15" style="left:501.5px;top:19.10px;font-size:7px;color:#bfc3ca;transform:scaleX(0.8104)">Express</span>
<span class="t" id="t16" style="left:437.8px;top:18.15px;font-size:8.5px;color:#bfc3ca;font-family:'DejaVu Sans',sans-serif;transform:scaleX(0.8460)">♪</span>
<span class="t" id="t17" style="left:8.5px;top:31.70px;font-size:7px;color:#e4e6ea;transform:scaleX(0.7453)">ホーム</span>
<span class="t" id="t18" style="left:34.5px;top:31.70px;font-size:7px;color:#bfc3ca;transform:scaleX(0.8571)">挿入</span>
<span class="t" id="t19" style="left:58px;top:31.70px;font-size:7px;color:#bfc3ca;transform:scaleX(0.8571)">注釈</span>
<span class="t" id="t20" style="left:81px;top:31.70px;font-size:7px;color:#bfc3ca;transform:scaleX(0.7365)">3D ツール</span>
<span class="t" id="t21" style="left:115px;top:31.70px;font-size:7px;color:#bfc3ca;transform:scaleX(0.6850)">ビジュアライズ</span>
<span class="t" id="t22" style="left:158.5px;top:31.70px;font-size:7px;color:#bfc3ca;transform:scaleX(0.8571)">表示</span>
<span class="t" id="t23" style="left:182px;top:31.70px;font-size:7px;color:#bfc3ca;transform:scaleX(0.8929)">管理</span>
<span class="t" id="t24" style="left:205.5px;top:31.70px;font-size:7px;color:#bfc3ca;transform:scaleX(0.8929)">出力</span>
<span class="t" id="t25" style="left:228.5px;top:31.70px;font-size:7px;color:#bfc3ca;transform:scaleX(0.6964)">アドイン</span>
<span class="t" id="t26" style="left:258.5px;top:31.70px;font-size:7px;color:#bfc3ca;transform:scaleX(0.6429)">コラボレート</span>
<span class="t" id="t27" style="left:296.7px;top:31.70px;font-size:7px;color:#bfc3ca;transform:scaleX(0.8714)">自動化</span>
<span class="t" id="t28" style="left:326px;top:31.70px;font-size:7px;color:#bfc3ca;transform:scaleX(0.8446)">Express Tools</span>
<span class="t" id="t29" style="left:373.5px;top:31.70px;font-size:7px;color:#bfc3ca;transform:scaleX(0.7714)">注目アプリ</span>
<span class="t" id="t30" style="left:6px;top:42.80px;font-size:7px;color:#e2e4e8;transform:scaleX(0.8929)">作成</span>
<span class="t" id="t31" style="left:25px;top:42.80px;font-size:7px;color:#e2e4e8;transform:scaleX(0.8929)">修正</span>
<span class="t" id="t32" style="left:43.5px;top:42.80px;font-size:7px;color:#e2e4e8;transform:scaleX(0.8571)">注釈</span>
<span class="t" id="t33" style="left:62px;top:42.80px;font-size:7px;color:#e2e4e8;transform:scaleX(0.8571)">画層</span>
<span class="t" id="t34" style="left:80.5px;top:42.80px;font-size:7px;color:#e2e4e8;transform:scaleX(0.6786)">ブロック</span>
<span class="t" id="t35" style="left:105px;top:42.80px;font-size:7px;color:#e2e4e8;transform:scaleX(0.6938)">プロパティ</span>
<span class="t" id="t36" style="left:141px;top:42.80px;font-size:7px;color:#e2e4e8;transform:scaleX(0.6704)">グループ</span>
<span class="t" id="t37" style="left:165.5px;top:42.80px;font-size:7px;color:#e2e4e8;transform:scaleX(0.6228)">ユーティリティ</span>
<span class="t" id="t38" style="left:202px;top:42.80px;font-size:7px;color:#e2e4e8;transform:scaleX(0.6531)">クリップボード</span>
<span class="t" id="t39" style="left:240px;top:42.80px;font-size:7px;color:#e2e4e8;transform:scaleX(0.8214)">表示</span>
<span class="t" id="t40" style="left:379.7px;top:5.00px;font-size:7.2px;color:#d0d3d8;transform:scaleX(0.8652)">Autodesk AutoCAD 2024</span>
<span class="t" id="t41" style="left:455.3px;top:5.00px;font-size:7.2px;color:#d0d3d8;transform:scaleX(0.8826)">Drawing1.dwg</span>
<span class="t" id="t42" style="left:676px;top:5.50px;font-size:6.6px;color:#aab0ba;font-style:italic;transform:scaleX(0.7268)">キーワードまたは語句を入力</span>
<span class="t" id="t43" style="left:193.3px;top:4.90px;font-size:7px;color:#4fa6e6;transform:scaleX(0.8571)">共有</span>
<span class="t" id="t44" style="left:33.3px;top:55.90px;font-size:7.4px;color:#f0f1f3;font-weight:bold;transform:scaleX(0.7993)">Drawing1*</span>
<span class="t" id="t45" style="left:17.5px;top:72.20px;font-size:6.8px;color:#e6e8eb;font-weight:300;transform:scaleX(1.0710)">[−]</span>
<span class="t" id="t46" style="left:26.2px;top:72.20px;font-size:6.8px;color:#e6e8eb;font-weight:300;transform:scaleX(0.7759)">[北東アイソメ ビュー]</span>
<span class="t" id="t47" style="left:78.1px;top:72.20px;font-size:6.8px;color:#e6e8eb;font-weight:300;transform:scaleX(0.8098)">[シェードとエッジ (高速)]</span>
<span class="t" id="t48" style="left:33.4px;top:535.70px;font-size:7px;color:#f0f1f3;transform:scaleX(0.7190)">モデル</span>
<span class="t" id="t49" style="left:61.6px;top:535.70px;font-size:7px;color:#d6d9de;transform:scaleX(0.6786)">レイアウト1</span>
<span class="t" id="t50" style="left:101.2px;top:535.70px;font-size:7px;color:#d6d9de;transform:scaleX(0.6683)">レイアウト2</span>
<span class="t" id="t51" style="left:30.5px;top:502.70px;font-size:7.6px;color:#161616;font-family:'Liberation Mono','IPAGothic','Noto Sans CJK JP',monospace;-webkit-text-stroke:0.08px #161616;transform:scaleX(0.8477)">基点を指定 または [移動距離(D)] &lt;移動距離&gt;:</span>
<span class="t" id="t52" style="left:30.5px;top:511.80px;font-size:7.6px;color:#161616;font-family:'Liberation Mono','IPAGothic','Noto Sans CJK JP',monospace;-webkit-text-stroke:0.08px #161616;transform:scaleX(0.8202)">目的点を指定 または &lt;基点を移動距離として使用&gt;:</span>
<span class="t" id="t53" style="left:48.5px;top:520.90px;font-size:6.8px;color:#9aa0a8;font-style:italic;transform:scaleX(0.7798)">ここにコマンドを入力</span>
<span class="t" id="t54" style="left:608.2px;top:536.20px;font-size:7.4px;color:#f4f5f7;font-weight:500;transform:scaleX(0.6580)">モデル</span>
<span class="t" id="t55" style="left:870px;top:536.70px;font-size:6.6px;color:#f0f1f3;transform:scaleX(0.8177)">1:1</span>
<span class="t" id="t56" style="left:957px;top:160.70px;font-size:5px;color:#3a3f48;transform:scaleX(0.8139)">WCS</span>
<span class="v" id="v0" style="left:5.500000000000001px;top:208px;transform:rotate(-90deg) scaleX(0.8312)">画層プロパティ管理</span>
<span class="v" id="v1" style="left:5.500000000000001px;top:425px;transform:rotate(-90deg) scaleX(0.7121)">プロパティ</span>
<span class="v" id="v2" style="left:1012.4000000000001px;top:339.3px;transform:rotate(-90deg) scaleX(0.7632)">ツール パレット - すべてのパレット</span>
</body></html>
